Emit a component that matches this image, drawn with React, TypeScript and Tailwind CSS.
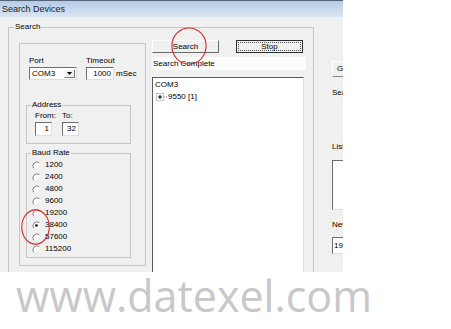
import React from "react";

const sunken =
  "border border-t-[#6e6e6e] border-l-[#6e6e6e] border-r-[#dedede] border-b-[#dedede] bg-white";

const bauds = ["1200", "2400", "4800", "9600", "19200", "38400", "57600", "115200"];

function Radio({ on }: { on?: boolean }) {
  return (
    <svg width="9" height="9" viewBox="0 0 9 9" className="shrink-0">
      <circle cx="4.5" cy="4.5" r="4" fill="#fff" />
      <path d="M7.3 1.7 A4 4 0 0 0 1.7 7.3" stroke="#7a7a7a" fill="none" />
      <path d="M1.7 7.3 A4 4 0 0 0 7.3 1.7" stroke="#e6e6e6" fill="none" />
      {on && <circle cx="4.5" cy="4.5" r="1.3" fill="#000" />}
    </svg>
  );
}

function TreePlus() {
  return (
    <svg width="11" height="9" viewBox="0 0 11 9" className="shrink-0">
      <rect x="0.5" y="0.5" width="7" height="7" fill="#fff" stroke="#8a8a8a" strokeDasharray="1 1" />
      <path d="M2 4h4M4 2v4" stroke="#000" />
      <path d="M8 4h3" stroke="#8a8a8a" strokeDasharray="1 1" />
    </svg>
  );
}

function Circle({ className }: { className: string }) {
  return (
    <svg className={className} viewBox="0 0 40 40" preserveAspectRatio="none">
      <ellipse cx="20" cy="20" rx="19" ry="19" fill="none" stroke="#d92a2a" strokeWidth="1.1" vectorEffect="non-scaling-stroke" />
    </svg>
  );
}

export default function App() {
  return (
    <div className="relative w-[451px] h-[329px] bg-white overflow-hidden font-['Liberation_Sans',Arial,sans-serif] text-[8px] leading-[10px] text-black">
      <div className="w-[343px] h-[272px] overflow-hidden flex flex-col bg-[#f0f0f0]">
        <div className="h-[17px] shrink-0 border-t border-[#55667a] bg-linear-to-b from-[#b5cbe5] to-[#d9e6f3] pl-[2px] text-[9px] leading-[16px] text-[#1b1b1b]">
          Search Devices
        </div>

        <div className="flex flex-1">
          {/* Search group */}
          <fieldset className="ml-[8px] mt-[5px] w-[306px] h-[262px] shrink-0 border border-[#c6c6c6]">
            <legend className="ml-[5px] px-[1px] leading-[10px]">Search</legend>
            <div className="flex pt-[8px] pl-[10px]">
              {/* left settings box */}
              <div className="mt-[3px] w-[127px] h-[223px] shrink-0 border border-[#c6c6c6] pl-[6px] pt-[12px]">
                <div className="flex ml-[3px]">
                  <div className="flex flex-col w-[48px]">
                    <span>Port</span>
                    <div className={`mt-[1px] h-[13px] flex ${sunken}`}>
                      <span className="flex-1 pl-[2px] leading-[11px]">COM3</span>
                      <div className="w-[11px] m-[1px] border border-t-white border-l-white border-r-[#777] border-b-[#777] bg-[#f0f0f0] flex items-center justify-center">
                        <svg width="5" height="3" viewBox="0 0 5 3">
                          <path d="M0 0h5L2.5 3z" fill="#000" />
                        </svg>
                      </div>
                    </div>
                  </div>
                  <div className="flex flex-col ml-[9px]">
                    <span>Timeout</span>
                    <div className="mt-[1px] flex items-center">
                      <div className={`w-[28px] h-[13px] pr-[2px] text-right leading-[11px] ${sunken}`}>1000</div>
                      <span className="ml-[2px]">mSec</span>
                    </div>
                  </div>
                </div>

                <fieldset className="mt-[20px] w-[105px] border border-[#c6c6c6] pb-[7px]">
                  <legend className="ml-[4px] px-[1px] leading-[10px]">Address</legend>
                  <div className="flex pl-[8px] pt-[1px]">
                    <span className="w-[27px]">From:</span>
                    <span>To:</span>
                  </div>
                  <div className="flex pl-[8px] mt-[1px]">
                    <div className={`w-[17px] h-[14px] pr-[2px] text-right leading-[12px] ${sunken}`}>1</div>
                    <div className={`ml-[10px] w-[17px] h-[14px] pr-[2px] text-right leading-[12px] ${sunken}`}>32</div>
                  </div>
                </fieldset>

                <fieldset className="mt-[4px] w-[105px] border border-[#c6c6c6] pt-[1px] pb-[2px]">
                  <legend className="ml-[4px] px-[1px] leading-[10px]">Baud Rate</legend>
                  {bauds.map((b) => (
                    <div key={b} className="flex items-center h-[12px] pl-[5px] gap-[4px]">
                      <Radio on={b === "38400"} />
                      <span>{b}</span>
                    </div>
                  ))}
                </fieldset>
              </div>

              {/* search results */}
              <div className="ml-[6px] w-[154px] flex flex-col shrink-0">
                <div className="flex">
                  <button className="w-[67px] h-[13px] border border-t-white border-l-white border-r-[#6a6a6a] border-b-[#6a6a6a] bg-[#f0f0f0] leading-[11px] text-center">
                    Search
                  </button>
                  <button className="ml-[17px] w-[67px] h-[13px] border border-[#2e2e2e] bg-[#f0f0f0] p-[1px]">
                    <div className="h-full border border-dotted border-[#555] leading-[8px] text-center">Stop</div>
                  </button>
                </div>
                <div className="mt-[4px] h-[13px] bg-[#fcfcfc] pl-[1px] leading-[13px]">Search Complete</div>
                <div className="mt-[7px] w-[152px] h-[200px] border border-t-[#5a5a5a] border-l-[#5a5a5a] border-r-[#e0e0e0] border-b-[#e0e0e0] bg-white pl-[2px] pt-[1px]">
                  <div className="h-[12px] leading-[12px]">COM3</div>
                  <div className="h-[12px] flex items-center gap-[1px] pl-[1px]">
                    <TreePlus />
                    <span>9550 [1]</span>
                  </div>
                </div>
              </div>
            </div>
          </fieldset>

          {/* right panel, cut off by the dialog edge */}
          <div className="pl-[18px] pt-[44px] flex flex-col w-[80px] shrink-0">
            <div className="w-[60px] h-[16px] border border-t-white border-l-white border-r-[#8a8a8a] border-b-[#8a8a8a] pl-[4px] leading-[14px]">
              G
            </div>
            <span className="mt-[11px]">Search</span>
            <span className="mt-[44px]">List</span>
            <div className={`mt-[8px] w-[60px] h-[50px] ${sunken}`}></div>
            <span className="mt-[10px]">New</span>
            <div className={`mt-[7px] w-[60px] h-[17px] pl-[1px] leading-[15px] ${sunken}`}>192</div>
          </div>
        </div>
      </div>

      <div className="mt-[2px] pl-[16px] font-['Open_Sans',sans-serif] text-[43px] leading-[43px] text-[#c8c8c8]">
        www.datexel.com
      </div>

      <Circle className="absolute left-[171px] top-[27px] w-[36px] h-[38px]" />
      <Circle className="absolute left-[21px] top-[209px] w-[29px] h-[36px]" />
    </div>
  );
}
